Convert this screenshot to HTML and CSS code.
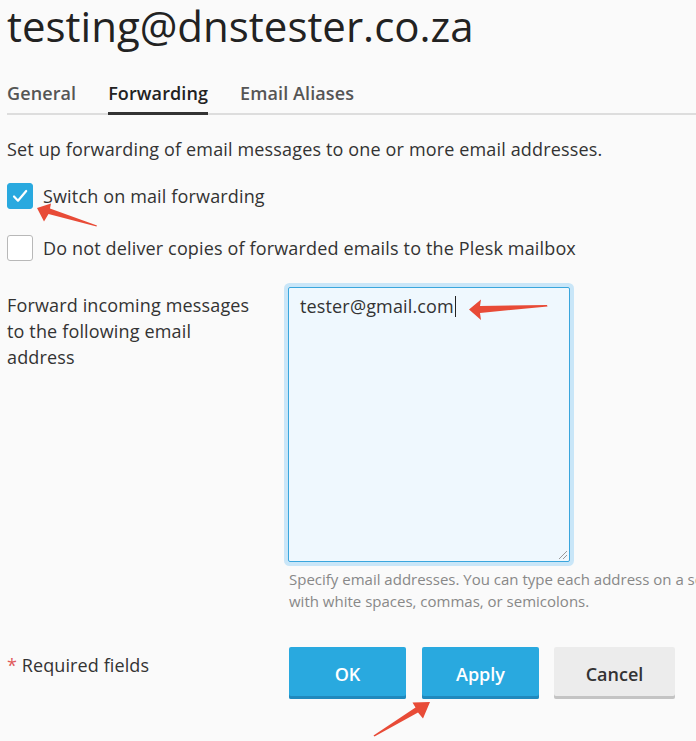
FILE: index.html
```html
<!DOCTYPE html>
<html lang="en">
<head>
<meta charset="utf-8">
<title>testing@dnstester.co.za</title>
<link rel="stylesheet" href="styles.css">
</head>
<body>
<div class="page">
  <h1 class="title">testing@dnstester.co.za</h1>
  <nav class="tabs">
    <span class="tab">General</span>
    <span class="tab active">Forwarding</span>
    <span class="tab">Email Aliases</span>
  </nav>
  <p class="intro">Set up forwarding of email messages to one or more email addresses.</p>
  <div class="check">
    <span class="box checked"><svg width="26" height="26" viewBox="0 0 26 26"><path d="M7 13.5l4 4.2 8.2-9.7" fill="none" stroke="#fff" stroke-width="2.2" stroke-linecap="round" stroke-linejoin="round"/></svg></span>
    <span class="check-label">Switch on mail forwarding</span>
  </div>
  <div class="check">
    <span class="box"></span>
    <span class="check-label">Do not deliver copies of forwarded emails to the Plesk mailbox</span>
  </div>
  <div class="form-row">
    <div class="field-label">Forward incoming messages to the following email address</div>
    <div class="field">
      <div class="textarea">tester@gmail.com<span class="caret"></span>
        <svg class="grip" width="12" height="12" viewBox="0 0 12 12"><path d="M11 3L3 11M11 7L7 11" stroke="#999" stroke-width="1" fill="none"/></svg>
      </div>
      <div class="hint"><span class="hint-line">Specify email addresses. You can type each address on a separate line or separate them</span><span class="hint-line">with white spaces, commas, or semicolons.</span></div>
    </div>
  </div>
  <div class="actions">
    <div class="required"><span class="ast">*</span> Required fields</div>
    <div class="buttons">
      <span class="btn primary ok">OK</span>
      <span class="btn primary apply">Apply</span>
      <span class="btn cancel">Cancel</span>
    </div>
  </div>
  <svg class="annot" width="696" height="741" viewBox="0 0 696 741">
    <polygon fill="#e84b37" points="37,208 51,203.5 50,208.5 97,225.5 96.5,226.5 48.5,214 44,221.5"/>
    <polygon fill="#e84b37" points="469,309.5 481,299.5 480,306 547,305 547.5,306.5 480,313 481,320"/>
    <polygon fill="#e84b37" points="430,702 412.5,702.5 415.5,707.5 373.5,735.5 374.5,736.5 418,712.5 423,718.5"/>
  </svg>
</div>
</body>
</html>
```
FILE: styles.css
```css
html, body {
  margin: 0;
  padding: 0;
  background: #fafafa;
  overflow: hidden;
}
body {
  font-family: "Open Sans", "Noto Sans", sans-serif;
  color: #333;
  width: 696px;
  height: 741px;
}
.page {
  position: relative;
  padding-left: 7px;
  padding-top: 0;
  height: 741px;
  box-sizing: border-box;
  overflow: hidden;
}
.title {
  margin: 0;
  font-size: 42px;
  font-weight: 400;
  line-height: 52px;
  color: #222;
  white-space: nowrap;
}
.tabs {
  margin-top: 29px;
  display: flex;
  gap: 32px;
  height: 34px;
  box-shadow: inset 0 -2px 0 #dddddd;
}
.tab {
  font-size: 18px;
  font-weight: 600;
  line-height: 24px;
  color: #555;
  padding-bottom: 7px;
  border-bottom: 3px solid transparent;
  letter-spacing: 0.1px;
}
.tab.active {
  color: #222;
  border-bottom-color: #333;
}
.intro {
  margin: 22px 0 0;
  font-size: 18px;
  line-height: 24px;
  letter-spacing: 0.15px;
  white-space: nowrap;
}
.check {
  display: flex;
  align-items: center;
  gap: 10px;
  height: 26px;
  margin-top: 22px;
}
.check + .check {
  margin-top: 26px;
}
.box {
  width: 26px;
  height: 26px;
  box-sizing: border-box;
  border: 1px solid #b8b8b8;
  border-radius: 3px;
  background: #fff;
  flex: none;
  display: block;
}
.box.checked {
  background: #29a9df;
  border-color: #29a9df;
}
.box svg {
  display: block;
  margin: -1px;
}
.check-label {
  font-size: 18px;
  line-height: 24px;
  letter-spacing: 0.15px;
  white-space: nowrap;
}
.form-row {
  display: flex;
  margin-top: 26px;
}
.field-label {
  flex: none;
  width: 248px;
  margin-right: 33px;
  padding-top: 5px;
  font-size: 18px;
  line-height: 26px;
  letter-spacing: 0.15px;
}
.field {
  flex: none;
  width: 412px;
  overflow: hidden;
  padding: 4px 0 0 4px;
  margin: -4px 0 0 -4px;
}
.textarea {
  position: relative;
  width: 282px;
  height: 275px;
  box-sizing: border-box;
  border: 1px solid #3aa6dd;
  border-radius: 2px;
  box-shadow: 0 0 0 4px #c9e6f8;
  background: #eff8fe;
  padding: 6px 11px;
  font-size: 18px;
  line-height: 24px;
  letter-spacing: 0.15px;
  color: #333;
}
.caret {
  display: inline-block;
  width: 1px;
  height: 21px;
  background: #222;
  vertical-align: -4px;
  margin-left: 1px;
}
.grip {
  position: absolute;
  right: 1px;
  bottom: 1px;
}
.hint {
  margin-top: 6px;
  font-size: 15px;
  line-height: 22px;
  color: #888;
  padding-left: 1px;
}
.hint-line {
  display: block;
  white-space: nowrap;
}
.actions {
  display: flex;
  margin-top: 35px;
}
.required {
  flex: none;
  width: 281px;
  font-size: 18px;
  line-height: 24px;
  letter-spacing: 0.1px;
  padding-top: 6px;
  color: #333;
}
.ast {
  color: #e05a5a;
}
.buttons {
  display: flex;
  gap: 16px;
  padding-left: 1px;
}
.btn {
  display: flex;
  align-items: center;
  justify-content: center;
  height: 52px;
  box-sizing: border-box;
  padding-top: 1px;
  border-radius: 2px;
  font-size: 18px;
  font-weight: 600;
}
.primary {
  background: #29a9df;
  color: #fff;
  box-shadow: inset 0 -3px 0 #2089bd;
}
.ok, .apply {
  width: 117px;
}
.cancel {
  width: 121px;
  margin-left: -1px;
  background: #ececec;
  color: #333;
  box-shadow: inset 0 -3px 0 #c4c4c4;
}
.annot {
  position: absolute;
  left: 0;
  top: 0;
  pointer-events: none;
}
```
